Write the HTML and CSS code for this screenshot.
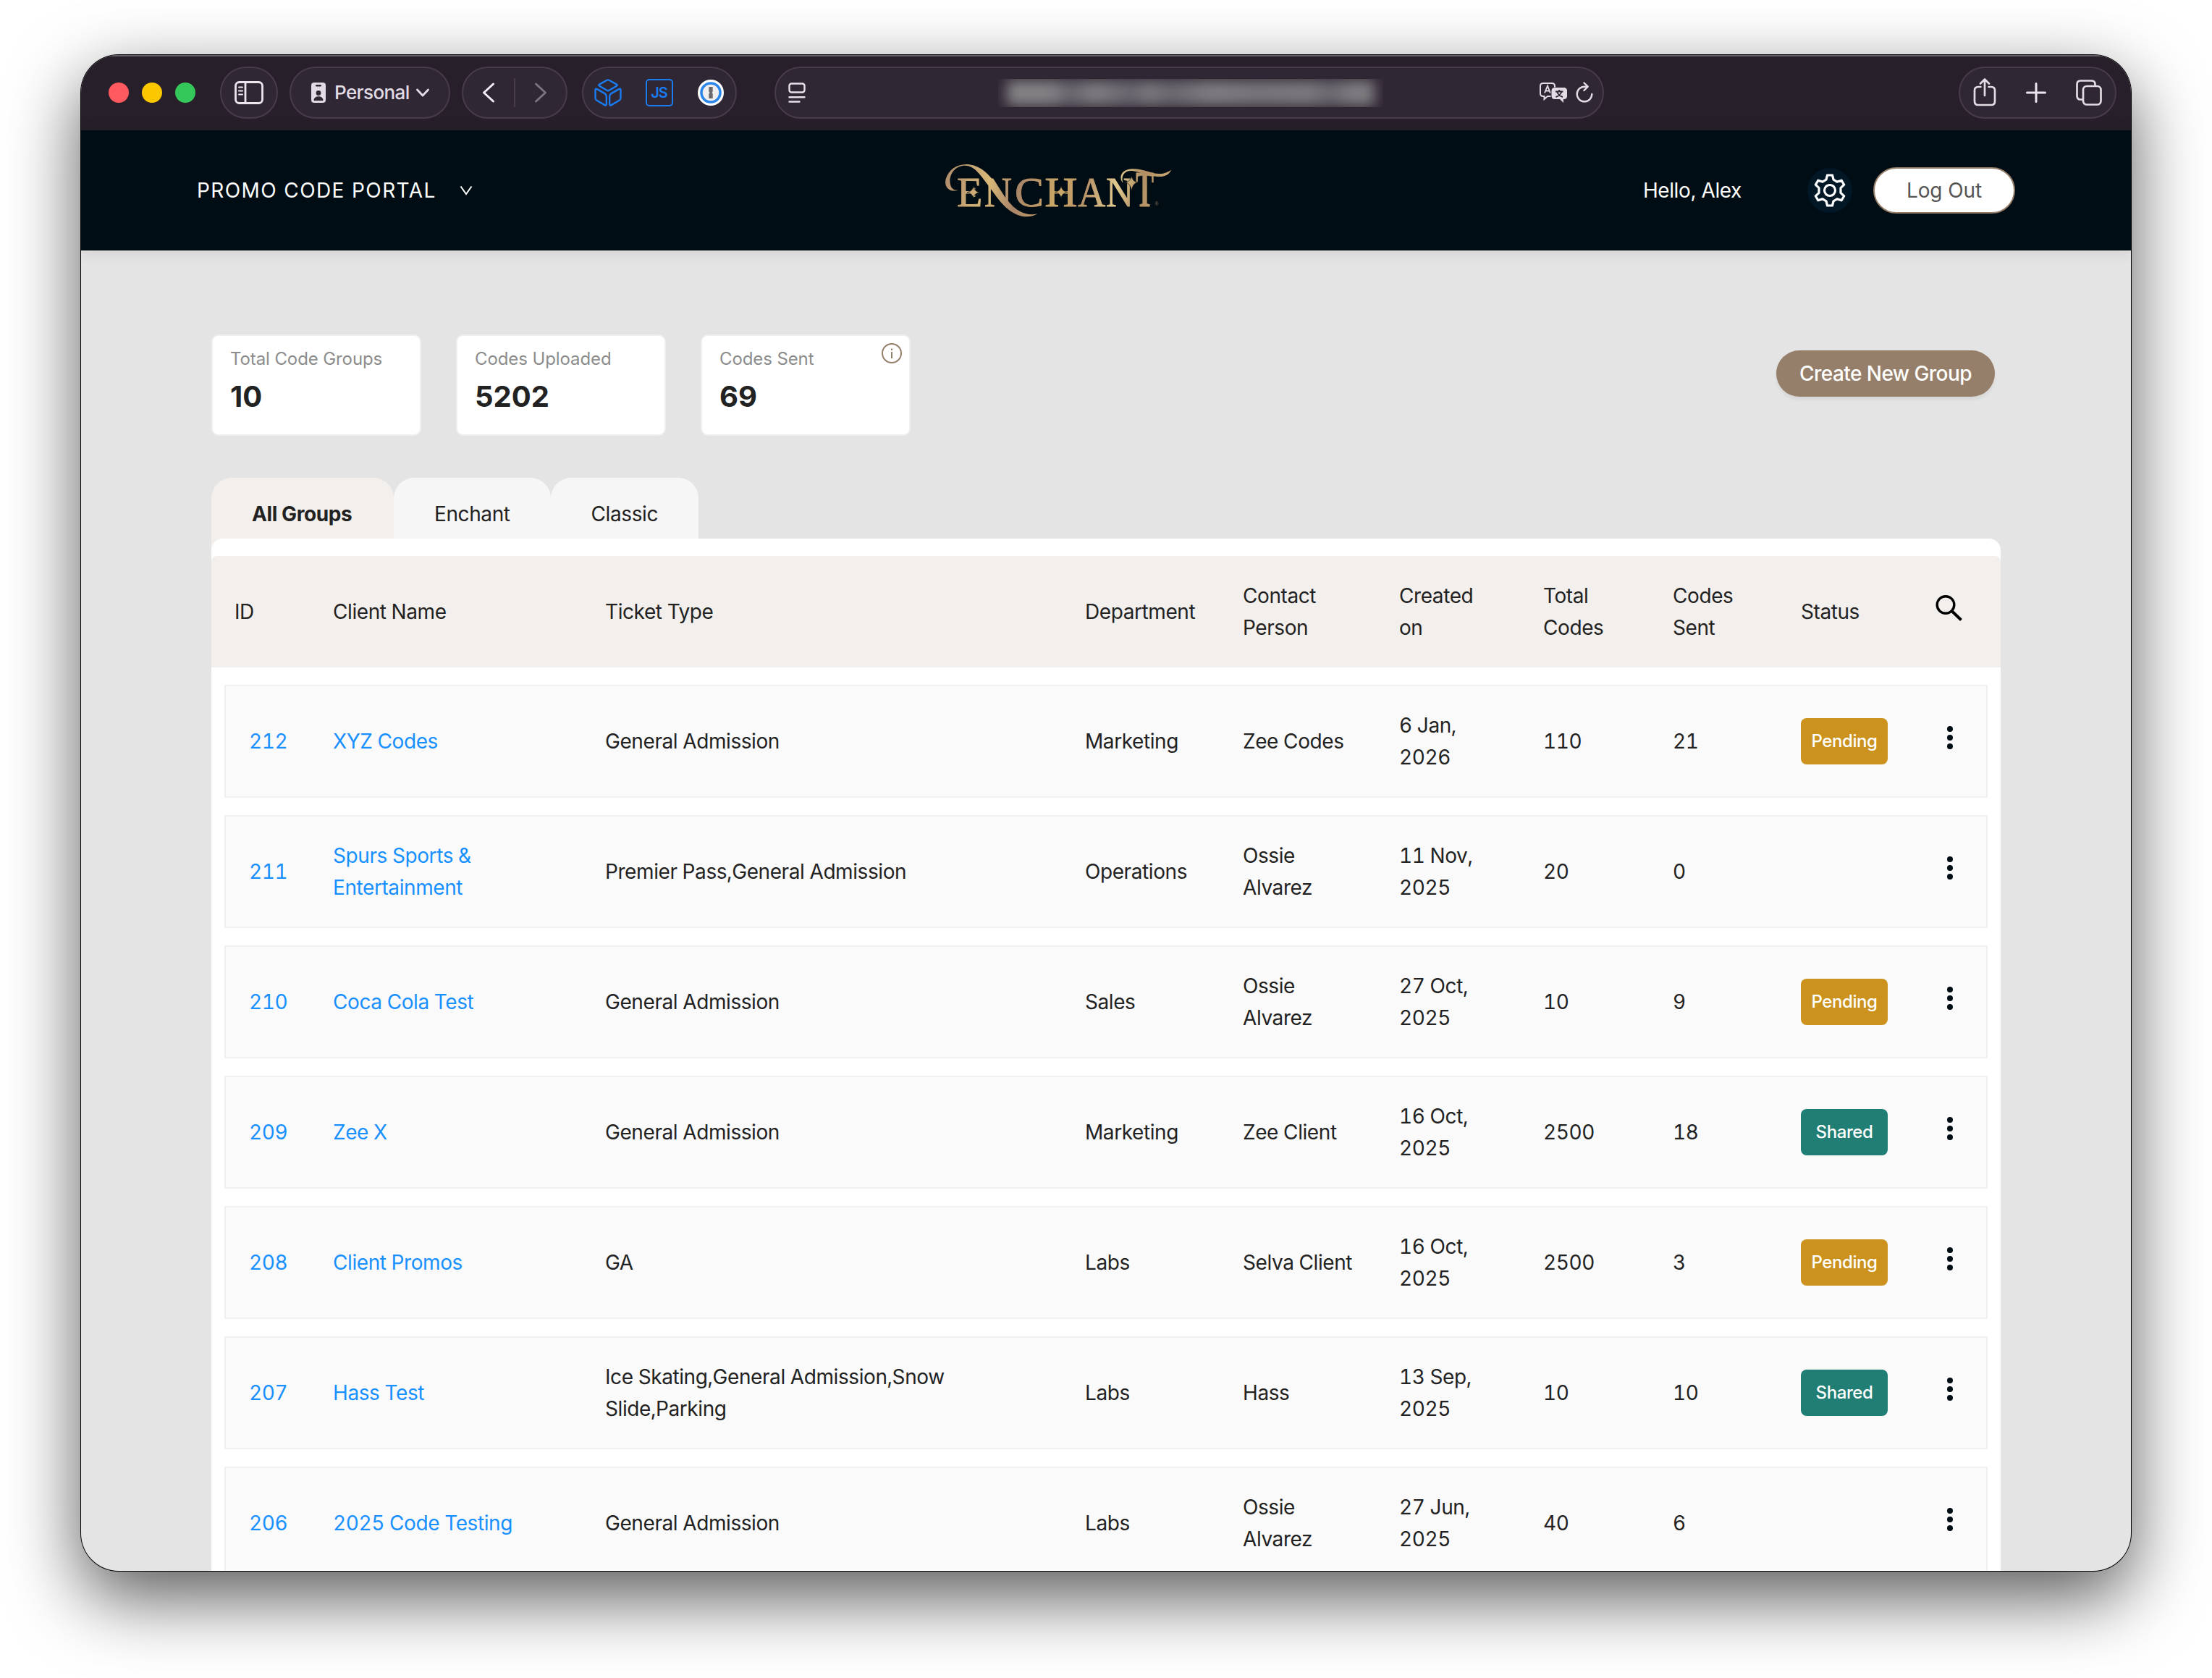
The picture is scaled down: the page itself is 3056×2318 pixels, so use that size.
FILE: index.html
```html
<!DOCTYPE html>
<html lang="en">
<head>
    <meta charset="UTF-8">
    <title>Promo Code Portal</title>
    <link rel="stylesheet" href="styles.css">
</head>
<body>
<div class="window">
    <div class="toolbar">
        <div class="lights">
            <span class="light red"></span>
            <span class="light yellow"></span>
            <span class="light green"></span>
        </div>
        <div class="pill sidebar-btn">
            <svg width="40" height="32" viewBox="0 0 40 32" fill="none" stroke="#ece6ee" stroke-width="2.8">
                <rect x="1.5" y="1.5" width="37" height="29" rx="5"/>
                <path d="M15 2v28"/>
                <path d="M6 8.5h5M6 13.5h5M6 18.5h5" stroke-width="2" stroke-linecap="round"/>
            </svg>
        </div>
        <div class="pill profile">
            <svg width="20" height="28" viewBox="0 0 20 28">
                <rect width="20" height="28" rx="4" fill="#e2dce4"/>
                <rect x="6" y="3" width="8" height="2.4" rx="1" fill="#302734"/>
                <circle cx="10" cy="14.5" r="3.4" fill="#302734"/>
                <path d="M3.5 25c0-4 3-5.8 6.5-5.8s6.5 1.8 6.5 5.8z" fill="#302734"/>
            </svg>
            <span>Personal</span>
            <svg width="18" height="12" viewBox="0 0 18 12" fill="none" stroke="#e2dce4" stroke-width="2.8" stroke-linecap="round" stroke-linejoin="round"><path d="M1.5 2l7.5 8 7.5-8"/></svg>
        </div>
        <div class="pill nav">
            <svg width="18" height="28" viewBox="0 0 18 28" fill="none" stroke="#f2edf4" stroke-width="3" stroke-linecap="round" stroke-linejoin="round"><path d="M15.5 2L2.5 14l13 12"/></svg>
            <span class="nav-line"></span>
            <svg width="18" height="28" viewBox="0 0 18 28" fill="none" stroke="#7b7380" stroke-width="3" stroke-linecap="round" stroke-linejoin="round"><path d="M2.5 2l13 12-13 12"/></svg>
        </div>
        <div class="pill extensions">
            <svg width="38" height="38" viewBox="0 0 38 38" fill="none" stroke="#1a7cf0" stroke-width="2.4" stroke-linejoin="round">
                <path d="M17.5 1.8q1.5-.9 3 0l10.5 5.8q1.6 1 0 2L20.5 15.8q-1.5.9-3 0L7 9.6q-1.6-1 0-2z"/>
                <path d="M1.5 15.5q0-2.8 2.5-1.4l10.5 6q2.3 1.4 2.3 4v10.500q0 2.800-2.400 1.500L3.600 29.800q-2.100-1.200-2.100-3.800z"/>
                <path d="M36.5 15.5q0-2.8-2.5-1.4l-10.5 6q-2.3 1.4-2.3 4v10.500q0 2.800 2.400 1.500l10.800-6.300q2.100-1.200 2.100-3.800z"/>
            </svg>
            <span class="js-badge">JS</span>
            <svg width="36" height="36" viewBox="0 0 36 36">
                <circle cx="18" cy="18" r="18" fill="#fff"/>
                <circle cx="18" cy="18" r="13" fill="#f0efee" stroke="#2a86e8" stroke-width="3.6"/>
                <path d="M15.3 10h5.4v6.5l-1.3 1.4 1.3 1.4V26h-5.4v-6.5l1.3-1.4-1.3-1.4z" fill="#6a6a6e"/>
            </svg>
        </div>
        <div class="pill address">
            <svg width="24" height="28" viewBox="0 0 24 28" fill="none" stroke="#e8e2ea" stroke-width="2.4" stroke-linecap="round">
                <rect x="1.5" y="1.5" width="21" height="12" rx="3"/>
                <path d="M1.5 20.3h21M1.5 26.5h14"/>
            </svg>
            <div class="address-url"><div class="address-blur"></div></div>
            <div class="address-actions">
                <svg width="38" height="28" viewBox="0 0 38 28">
                    <path d="M15.5 19H11l-4.5 4v-4H5q-4 0-4-4V5q0-4 4-4h12q4 0 4 4v1.5" fill="none" stroke="#e2dce4" stroke-width="2"/>
                    <path d="M7 14.5l4-10 3.8 10M8.4 11.5h5" fill="none" stroke="#e2dce4" stroke-width="1.9"/>
                    <path d="M21 7h12.5q4.5 0 4.5 4.5v7q0 4.500-4.500 4.500H33v5l-5-5h-7q-4.500 0-4.500-4.500v-7Q16.500 7 21 7z" fill="#e2dce4"/>
                    <path d="M22 12.5h10.5M27.200 10v2.500M30.500 12.500q-2 5.500-8 7.500M24 12.500q2 5.500 8 7.500" fill="none" stroke="#302734" stroke-width="2"/>
                </svg>
                <svg width="24" height="30" viewBox="0 0 24 30" fill="none" stroke="#e2dce4" stroke-width="2.4" stroke-linecap="round" stroke-linejoin="round">
                    <path d="M22.3 17a10.3 10.3 0 1 1-10.3-10.3h4"/>
                    <path d="M11.5 1.5l5.2 5.2-5.2 5.2"/>
                </svg>
            </div>
        </div>
        <div class="pill actions">
            <svg width="32" height="40" viewBox="0 0 32 40" fill="none" stroke="#e2dce4" stroke-width="2.7" stroke-linecap="round" stroke-linejoin="round">
                <path d="M10.5 12H7q-5 0-5 5v15q0 5 5 5h18q5 0 5-5V17q0-5-5-5h-3.5"/>
                <path d="M16 24V1.5M10 7.5l6-6 6 6"/>
            </svg>
            <svg width="28" height="28" viewBox="0 0 28 28" stroke="#ece6ee" stroke-width="3" stroke-linecap="round"><path d="M14 1.5v25M1.5 14h25"/></svg>
            <svg width="36" height="36" viewBox="0 0 36 36" fill="none" stroke="#e2dce4" stroke-width="2.7">
                <rect x="10" y="9" width="24.5" height="25.5" rx="5"/>
                <path d="M10 27.5H6.5q-5 0-5-5v-16q0-5 5-5h15q5 0 5 5V9"/>
            </svg>
        </div>
    </div>

    <header class="header">
        <div class="portal">
            <span>PROMO CODE PORTAL</span>
            <svg width="18" height="14" viewBox="0 0 18 14" fill="none" stroke="#fff" stroke-width="2"><path d="M1.5 1.5L9 12l7.5-10.5"/></svg>
        </div>
        <svg class="logo" width="360" height="120" viewBox="0 0 1080 360">
            <defs>
                <linearGradient id="gold" gradientUnits="userSpaceOnUse" x1="80" y1="100" x2="1010" y2="280">
                    <stop offset="0" stop-color="#b08d6e"/>
                    <stop offset=".2" stop-color="#d8b878"/>
                    <stop offset=".32" stop-color="#a98468"/>
                    <stop offset=".5" stop-color="#cba867"/>
                    <stop offset=".62" stop-color="#b8946a"/>
                    <stop offset=".75" stop-color="#e3cb8f"/>
                    <stop offset=".85" stop-color="#b08d62"/>
                    <stop offset="1" stop-color="#d2b077"/>
                </linearGradient>
            </defs>
            <g class="logo-letters" fill="url(#gold)" stroke="url(#gold)" stroke-width="2.5" font-size="174">
                <text x="126" y="254" textLength="106" lengthAdjust="spacingAndGlyphs">E</text>
                <text x="240" y="254" textLength="114" lengthAdjust="spacingAndGlyphs">N</text>
                <text x="366" y="254" textLength="120" lengthAdjust="spacingAndGlyphs">C</text>
                <text x="490" y="254" textLength="136" lengthAdjust="spacingAndGlyphs">H</text>
                <text x="628" y="254" textLength="114" lengthAdjust="spacingAndGlyphs">A</text>
                <text x="744" y="254" textLength="114" lengthAdjust="spacingAndGlyphs">N</text>
                <text x="868" y="254" font-size="208" font-weight="bold" textLength="74" lengthAdjust="spacingAndGlyphs">T</text>
            </g>
            <g fill="url(#gold)">
                <!-- swashes -->
                <path d="M132 188C92 200 72 172 80 142C92 102 130 76 178 82C236 90 268 134 304 186C340 238 382 302 460 286C436 302 400 300 376 290C320 266 290 214 254 166C222 122 196 86 160 86C118 86 92 124 98 160C102 184 116 190 132 188Z"/>
                <path d="M814 158C796 136 806 102 852 100C896 98 930 120 964 120C988 120 1002 112 1014 104C1006 124 986 134 958 132C920 130 886 112 852 108C818 106 806 130 814 158Z"/>
                <!-- sparkles -->
                <path d="M194 172q4 22 26 25q-22 3-26 25q-4-22-26-25q22-3 26-25zM558 170q4 23 26 26q-22 3-26 26q-4-23-26-26q22-3 26-26zM850 130q4 23 26 26q-22 3-26 36q-4-33-26-36q22-3 26-26z" stroke="#010d14" stroke-width="2"/>
            </g>
            <text class="logo-letters" x="945" y="252" font-size="23" fill="#8a7659">®</text>
        </svg>
        <div class="account">
            <span class="hello">Hello, Alex</span>
            <span class="gear">
                <svg width="46" height="46" viewBox="0 0 46 46" fill="none" stroke="#fff" stroke-width="3.2" stroke-linejoin="round">
                    <path d="M19.5 2h7l1.5 6.2 5 2.9 6.2-1.9 3.5 6-4.7 4.4v6.8l4.7 4.400-3.500 6-6.200-1.900-5 2.900L26.500 44h-7L18 37.800l-5-2.900-6.200 1.900-3.500-6L8 26.400v-6.800l-4.700-4.400 3.500-6L13 11.100l5-2.900z"/>
                    <circle cx="23" cy="23" r="7.5"/>
                </svg>
            </span>
            <button class="logout">Log Out</button>
        </div>
    </header>

    <main class="content">
        <div class="summary">
            <div class="card">
                <div class="card-label">Total Code Groups</div>
                <div class="card-value">10</div>
            </div>
            <div class="card">
                <div class="card-label">Codes Uploaded</div>
                <div class="card-value">5202</div>
            </div>
            <div class="card">
                <div class="card-label">Codes Sent</div>
                <div class="card-value">69</div>
                <svg class="info" width="28" height="28" viewBox="0 0 28 28" fill="none" stroke="#957f6a" stroke-width="2"><circle cx="14" cy="14" r="13"/><path d="M14 12v9M14 7.5v2.5"/></svg>
            </div>
            <button class="create">Create New Group</button>
        </div>

        <div class="tabs">
            <div class="tab active">All Groups</div>
            <div class="tab">Enchant</div>
            <div class="tab">Classic</div>
        </div>

        <div class="table">
            <div class="row head">
                <span>ID</span>
                <span>Client Name</span>
                <span>Ticket Type</span>
                <span>Department</span>
                <span>Contact<br>Person</span>
                <span>Created<br>on</span>
                <span>Total<br>Codes</span>
                <span>Codes<br>Sent</span>
                <span>Status</span>
                <svg class="search" width="37" height="36" viewBox="0 0 37 36" fill="none" stroke="#000" stroke-width="3.4"><circle cx="14" cy="13.5" r="11.8"/><path d="M22.5 22L35.5 34.5" stroke-width="4"/></svg>
            </div>
            <div class="row">
                <a>212</a>
                <a>XYZ Codes</a>
                <span>General Admission</span>
                <span>Marketing</span>
                <span>Zee Codes</span>
                <span>6 Jan,<br>2026</span>
                <span>110</span>
                <span>21</span>
                <span class="badge pending">Pending</span>
                <span class="dots"><i></i><i></i><i></i></span>
            </div>
            <div class="row">
                <a>211</a>
                <a>Spurs Sports &amp;<br>Entertainment</a>
                <span>Premier Pass,General Admission</span>
                <span>Operations</span>
                <span>Ossie<br>Alvarez</span>
                <span>11 Nov,<br>2025</span>
                <span>20</span>
                <span>0</span>
                <span></span>
                <span class="dots"><i></i><i></i><i></i></span>
            </div>
            <div class="row">
                <a>210</a>
                <a>Coca Cola Test</a>
                <span>General Admission</span>
                <span>Sales</span>
                <span>Ossie<br>Alvarez</span>
                <span>27 Oct,<br>2025</span>
                <span>10</span>
                <span>9</span>
                <span class="badge pending">Pending</span>
                <span class="dots"><i></i><i></i><i></i></span>
            </div>
            <div class="row">
                <a>209</a>
                <a>Zee X</a>
                <span>General Admission</span>
                <span>Marketing</span>
                <span>Zee Client</span>
                <span>16 Oct,<br>2025</span>
                <span>2500</span>
                <span>18</span>
                <span class="badge shared">Shared</span>
                <span class="dots"><i></i><i></i><i></i></span>
            </div>
            <div class="row">
                <a>208</a>
                <a>Client Promos</a>
                <span>GA</span>
                <span>Labs</span>
                <span>Selva Client</span>
                <span>16 Oct,<br>2025</span>
                <span>2500</span>
                <span>3</span>
                <span class="badge pending">Pending</span>
                <span class="dots"><i></i><i></i><i></i></span>
            </div>
            <div class="row">
                <a>207</a>
                <a>Hass Test</a>
                <span>Ice Skating,General Admission,Snow<br>Slide,Parking</span>
                <span>Labs</span>
                <span>Hass</span>
                <span>13 Sep,<br>2025</span>
                <span>10</span>
                <span>10</span>
                <span class="badge shared">Shared</span>
                <span class="dots"><i></i><i></i><i></i></span>
            </div>
            <div class="row">
                <a>206</a>
                <a>2025 Code Testing</a>
                <span>General Admission</span>
                <span>Labs</span>
                <span>Ossie<br>Alvarez</span>
                <span>27 Jun,<br>2025</span>
                <span>40</span>
                <span>6</span>
                <span></span>
                <span class="dots"><i></i><i></i><i></i></span>
            </div>
        </div>
    </main>
</div>
</body>
</html>
```

FILE: styles.css
```css
* {
    box-sizing: border-box;
}
body {
    margin: 0;
    padding: 76px 112px 148px;
    height: 2318px;
    overflow: hidden;
    background: #fff;
    color: #222;
    font-family: Inter, "Liberation Sans", sans-serif;
    font-size: 28px;
    line-height: 44px;
}
svg {
    display: block;
    flex: none;
}
button {
    font-family: inherit;
    font-size: 28px;
    padding: 0;
    height: 64px;
    border-radius: 32px;
}
.window {
    height: 2094px;
    border-radius: 52px;
    overflow: hidden;
    background: #e4e4e4;
    display: flex;
    flex-direction: column;
    box-shadow: 0 0 0 1px #000, 0 36px 100px rgba(0, 0, 0, 0.66);
}

/* browser toolbar */
.toolbar {
    height: 104px;
    flex: none;
    background: #271f29;
    box-shadow: inset 0 2px 0 #66606a;
    display: flex;
    align-items: center;
    padding: 0 20px 0 38px;
}
.lights {
    display: flex;
    gap: 18px;
    width: 154px;
}
.light {
    width: 28px;
    height: 28px;
    border-radius: 50%;
}
.red { background: #ff5a5f; }
.yellow { background: #fbc800; }
.green { background: #34c759; }
.pill {
    height: 72px;
    border: 2px solid #463c4c;
    border-radius: 36px;
    background: #302734;
    display: flex;
    align-items: center;
    margin-right: 16px;
}
.sidebar-btn {
    width: 80px;
    justify-content: center;
    padding-right: 1px;
}
.profile {
    width: 222px;
    padding-left: 28px;
    color: #e2dce4;
    font-size: 26px;
    font-weight: 500;
}
.profile span {
    margin: 0 9px 0 12px;
    letter-spacing: -0.6px;
}
.nav {
    width: 146px;
    justify-content: space-between;
    padding: 0 26px;
    margin-right: 20px;
}
.nav-line {
    width: 2px;
    height: 40px;
    background: #463c4c;
}
.extensions {
    width: 214px;
    padding: 0 16px 0 15px;
    justify-content: space-between;
    margin-right: 52px;
}
.js-badge {
    width: 38px;
    height: 38px;
    margin-right: 2px;
    border: 2px solid #1a7cf0;
    border-radius: 5px;
    color: #1a7cf0;
    font-size: 20px;
    line-height: 34px;
    font-weight: 600;
    text-align: center;
    letter-spacing: -1px;
}
.address {
    width: 1146px;
    padding: 0 13px 0 17px;
    justify-content: space-between;
    margin-right: auto;
}
.address-url {
    width: 532px;
    height: 39px;
    margin-left: 50px;
    overflow: hidden;
}
.address-blur {
    height: 35px;
    margin: 2px 12px;
    background: linear-gradient(90deg, #858386 12%, #68646c 17%, #807e82 24%, #69656d 34%, #7c7a7e 39%, #6b676e 44%, #807e82 56%, #78757a 68%, #7c7a7e 82%, #6b676e 88%, #807e82 94%);
    filter: blur(9px);
}
.address-actions {
    display: flex;
    align-items: center;
    gap: 12px;
}
.actions {
    width: 218px;
    margin-right: 0;
    padding: 0 18px 0 18px;
    justify-content: space-between;
}

/* site header */
.header {
    height: 166px;
    flex: none;
    background: #010d14;
    color: #fff;
    display: grid;
    grid-template-columns: 1168px 360px 1fr;
    align-items: center;
    padding-right: 160px;
    box-shadow: 0 2px 20px rgba(0, 0, 0, 0.1);
}
.portal {
    display: flex;
    align-items: center;
    gap: 32px;
    padding-left: 160px;
    letter-spacing: 1.4px;
}
.logo {
    position: relative;
    top: -3px;
}
.logo-letters {
    font-family: "Liberation Serif", serif;
}
.account {
    display: flex;
    align-items: center;
    justify-content: flex-end;
}
.hello {
    margin-right: 91px;
    letter-spacing: -0.4px;
}
.gear {
    width: 62px;
    height: 62px;
    border-radius: 50%;
    background: #021827;
    display: grid;
    place-items: center;
    margin-right: 29px;
}
.logout {
    width: 196px;
    background: #fff;
    border: 2px solid #957f6a;
    color: #555;
    letter-spacing: -0.1px;
}

/* page */
.content {
    padding: 116px 180px 0;
}
.summary {
    display: flex;
    gap: 48px;
    height: 198px;
}
.card {
    position: relative;
    width: 290px;
    height: 140px;
    border: 2px solid #f0f0f0;
    border-radius: 10px;
    background: #fff;
    padding: 10px 24px;
}
.card-label {
    font-size: 24px;
    color: #8c8c8c;
    letter-spacing: -0.1px;
}
.card-value {
    margin-top: 6px;
    font-size: 40px;
    font-weight: 700;
    line-height: 48px;
}
.info {
    position: absolute;
    top: 10px;
    right: 10px;
}
.create {
    width: 302px;
    margin: 22px 8px 0 auto;
    border: none;
    background: #957f6a;
    color: #fff;
    font-weight: 500;
    letter-spacing: -0.55px;
    box-shadow: 0 4px 4px rgba(0, 0, 0, 0.06);
}
.tabs {
    display: flex;
    height: 84px;
    letter-spacing: -0.4px;
}
.tab {
    padding: 28px 56px 0;
    height: 100px;
    background: #f6f6f6;
    border-radius: 28px 28px 0 0;
}
.tab.active {
    width: 252px;
    background: #f2efec;
    font-weight: 700;
    letter-spacing: -0.4px;
    white-space: nowrap;
}
.table {
    position: relative;
    background: #fff;
    border-radius: 16px 16px 0 0;
    padding-top: 24px;
    height: 1500px;
    font-feature-settings: "tnum";
    letter-spacing: -0.42px;
}
.row {
    display: grid;
    grid-template-columns: 116px 376px 663px 218px 216px 199px 179px 177px 202px 1fr;
    align-items: center;
    height: 156px;
    margin: 24px 18px 0;
    padding-left: 32px;
    border: 2px solid #f0f0f0;
    background: #fafafa;
}
.row.head {
    grid-template-columns: 136px 376px 663px 218px 216px 199px 179px 177px 186px 1fr;
    height: 154px;
    margin: 0;
    padding-left: 32px;
    border: none;
    background: #f2efec;
    border-radius: 8px 8px 0 0;
}
.row a {
    color: #1890ff;
}
.search {
    position: relative;
    top: -5px;
}
.badge {
    width: 120px;
    height: 64px;
    border-radius: 8px;
    color: #fff;
    font-size: 24px;
    line-height: 63px;
    font-weight: 500;
    text-align: center;
    letter-spacing: -0.4px;
}
.pending { background: #cb931d; }
.shared { background: #217e74; }
.dots {
    display: flex;
    flex-direction: column;
    gap: 4px;
    padding-bottom: 10px;
}
.dots i {
    width: 8px;
    height: 8px;
    border-radius: 50%;
    background: #010d14;
}
```
